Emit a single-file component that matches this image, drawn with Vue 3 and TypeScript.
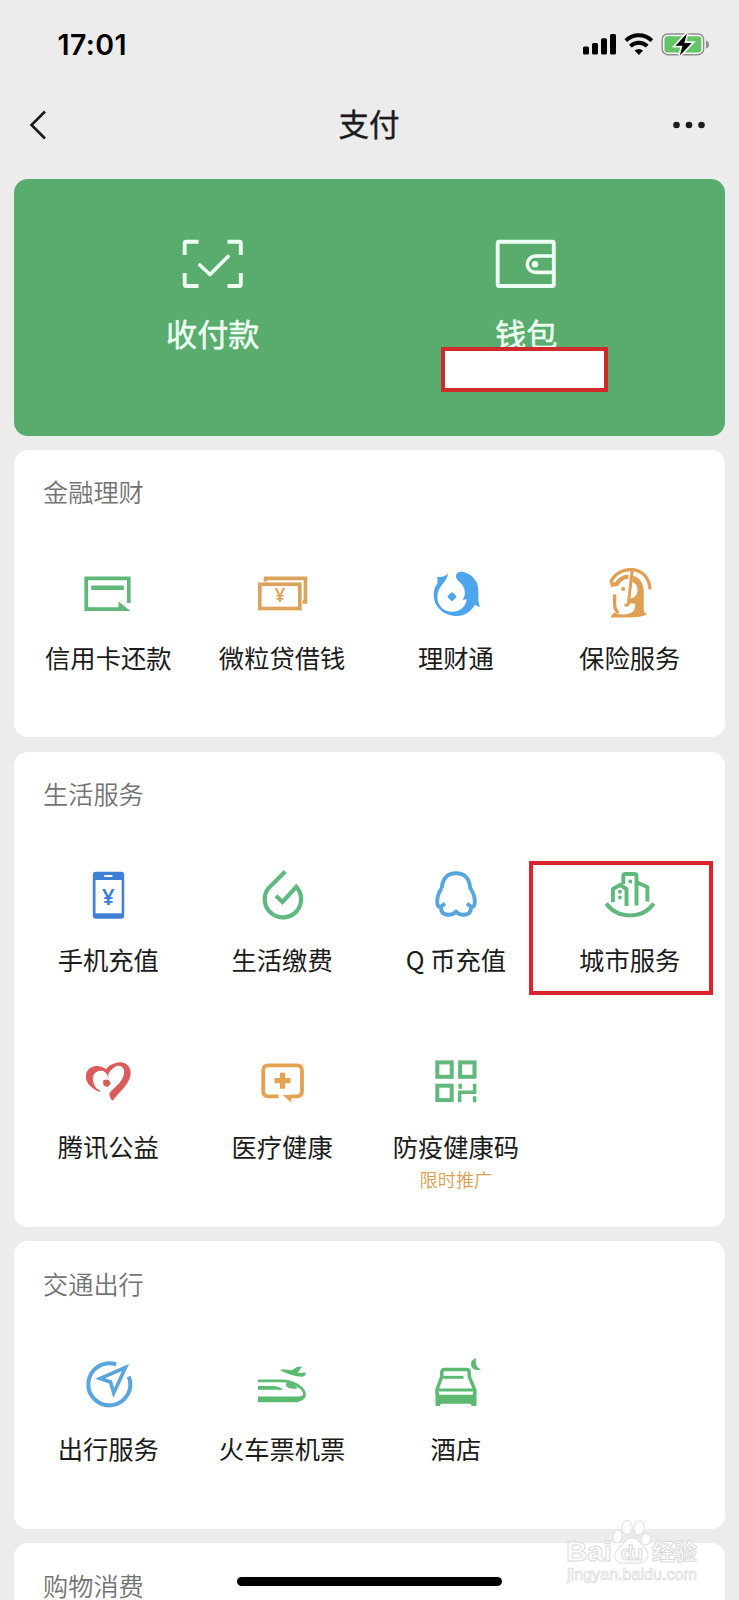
<script setup lang="ts">
interface Service {
  icon: string
  label: string
  note?: string
  marked?: boolean
}
interface Section {
  title: string
  items: Service[]
}

const sections: Section[] = [
  {
    title: '金融理财',
    items: [
      { icon: 'card', label: '信用卡还款' },
      { icon: 'cash', label: '微粒贷借钱' },
      { icon: 'fish', label: '理财通' },
      { icon: 'insurance', label: '保险服务' },
    ],
  },
  {
    title: '生活服务',
    items: [
      { icon: 'phone', label: '手机充值' },
      { icon: 'drop', label: '生活缴费' },
      { icon: 'qcoin', label: 'Q 币充值' },
      { icon: 'city', label: '城市服务', marked: true },
      { icon: 'heart', label: '腾讯公益' },
      { icon: 'medical', label: '医疗健康' },
      { icon: 'qrcode', label: '防疫健康码', note: '限时推广' },
    ],
  },
  {
    title: '交通出行',
    items: [
      { icon: 'compass', label: '出行服务' },
      { icon: 'train', label: '火车票机票' },
      { icon: 'hotel', label: '酒店' },
    ],
  },
  { title: '购物消费', items: [] },
]
</script>

<template>
  <main class="screen">
    <header class="status">
      <span class="time">17:01</span>
      <svg class="status-icons" width="130" height="26" viewBox="0 0 130 26">
        <g fill="#000">
          <rect x="1" y="15.5" width="6" height="8" rx="1.5" />
          <rect x="10" y="12" width="6" height="11.5" rx="1.5" />
          <rect x="19" y="7.3" width="6" height="16.2" rx="1.5" />
          <rect x="28" y="3" width="6" height="20.5" rx="1.5" />
        </g>
        <g fill="none" stroke="#000" stroke-width="3.9">
          <path d="M43.8 9.6a18.5 18.5 0 0 1 26 0" />
          <path d="M48.4 15.2a12 12 0 0 1 16.8 0" />
        </g>
        <path d="M52.6 19.6a6.2 6.2 0 0 1 8.4 0l-4.2 4.3z" />
        <rect x="80.2" y="3" width="41.4" height="20.7" rx="5.5" fill="#f5f5f5" stroke="#8e8e8e" stroke-width="1.4" />
        <rect x="82.5" y="5.3" width="36.8" height="16.1" rx="3" fill="#65c466" />
        <path d="M124 9.5q3 1 3 4t-3 4z" fill="#8e8e8e" />
        <path d="M105 2.5 93.5 14.7h7L97.8 24.5l12-12.6h-7.5z" stroke="#f3f5f3" stroke-width="3.4" />
        <path d="M105 2.5 93.5 14.7h7L97.8 24.5l12-12.6h-7.5z" />
      </svg>
    </header>

    <nav class="nav">
      <svg width="24" height="34" viewBox="0 0 24 34">
        <path d="M19 3.5 5.5 17l13.5 13.5" fill="none" stroke="#1c1c1c" stroke-width="2.6" />
      </svg>
      <h1>支付</h1>
      <svg width="34" height="10" viewBox="0 0 34 10" fill="#1c1c1c">
        <circle cx="4.5" cy="5" r="3.3" />
        <circle cx="17" cy="5" r="3.3" />
        <circle cx="29.5" cy="5" r="3.3" />
      </svg>
    </nav>

    <section class="hero">
      <div class="hero-item">
        <svg width="62" height="50" viewBox="0 0 62 50" fill="none" stroke="#edfff2" stroke-width="3.9">
          <path d="M2.7 16V4.2Q2.7 2.7 4.2 2.7H16.5M45.5 2.7H57.3Q58.8 2.7 58.8 4.2V16M58.8 34V45.500Q58.8 47 57.3 47H45.500M16.500 47H4.200Q2.700 47 2.700 45.500V34" />
          <path d="M17.800 26 28 35.500 46 17.500" stroke-linecap="round" stroke-linejoin="round" stroke-width="3.600" />
        </svg>
        <span class="hero-label">收付款</span>
      </div>
      <div class="hero-item">
        <svg width="62" height="50" viewBox="0 0 62 50" fill="none" stroke="#edfff2" stroke-width="3.9">
          <rect x="2.7" y="2.7" width="56.1" height="44.3" rx="1.5" />
          <path d="M58 17H40.5a8.2 8.2 0 0 0 0 16.4H58" stroke-width="3.6" />
          <circle cx="40" cy="25.2" r="3.3" fill="#edfff2" stroke="none" />
        </svg>
        <span class="hero-label">钱包</span>
        <i class="redaction"></i>
      </div>
    </section>

    <section v-for="section in sections" :key="section.title" class="panel">
      <h2>{{ section.title }}</h2>
      <div class="grid">
        <div v-for="item in section.items" :key="item.label" class="cell">
          <svg class="icon" width="60" height="60" viewBox="0 0 60 60" fill="none">
            <g v-if="item.icon === 'card'">
              <path d="M50.8 40V15.3H8.2V46.2H44" stroke="#5fb878" stroke-width="3.7" />
              <path d="M13.2 24.8H45.8" stroke="#5fb878" stroke-width="4.4" />
              <path d="M40.5 38.5 52.5 48H40.5z" fill="#5fb878" />
            </g>
            <g v-else-if="item.icon === 'cash'" stroke="#dba45c" stroke-width="3.7">
              <rect x="7.8" y="21.3" width="40" height="24.2" />
              <path d="M13.5 18.5V15.3H53.5V39H50.5" />
              <text class="yen" x="28" y="39" fill="#dba45c" stroke="none" font-size="19">¥</text>
            </g>
            <g v-else-if="item.icon === 'fish'" fill="#4da5ee">
              <path d="M22 10.3Q21.8 14 18.8 18.5C14.5 23.5 11.4 27.5 11.4 33.7C11.4 43 18 48.8 26 48.8C34 48.8 40 43.5 40.6 36.2Q38.5 37 36.5 36.5Q39.2 33.5 38.8 28.5C38.3 24 36.5 21.5 33 18.5Q29 15 30.2 11.7Q32.4 7.2 40 9.8C48.5 13 53 21 52.4 30.5Q51.6 38 53.9 44.3L48.8 41.8C45 49 38.5 53 30.8 53C17.5 53 7.7 43.5 7.7 32Q7.7 25 11.5 20.3Q11.8 16 11.2 13.8Q18 15 22 10.3z" />
              <path d="M26 30.5 29.2 33.7 26 36.9 22.8 33.7z" stroke="#4da5ee" stroke-width="2.4" stroke-linejoin="round" />
            </g>
            <g v-else-if="item.icon === 'insurance'" stroke="#e0a053">
              <path d="M10.6 19.6C14 11 22 6.6 30.5 6.6C42 6.6 49.5 14.5 50 26.5" stroke-width="3.2" />
              <path d="M32.2 7 28.5 40.5Q27.5 43.5 24.8 41.5" stroke-width="3" />
              <path d="M10.5 22 17 20.8Q20.5 14.3 28.5 13.5" stroke-width="4.2" />
              <path d="M14.6 31.5V41Q14.6 47 18.5 50" stroke-width="3.4" />
              <path d="M33 13C39.5 14 43.8 20 43.8 29V47.5Q44.2 50 47 51.5Q40 54.8 26 54.4L11 54.5Q10 54 14 49.5Q19 52.5 27 51C34 50 35.5 46 35 40.5H28.5L30.5 35.5Q37.5 34 37.5 27Q37.5 21 32.2 19z" fill="#e0a053" stroke="none" />
              <circle cx="23.2" cy="26" r="2" fill="#e0a053" stroke="none" />
            </g>
            <g v-else-if="item.icon === 'phone'">
              <rect x="14.8" y="6.7" width="31.4" height="47" rx="3.2" fill="#407fd6" />
              <path d="M17.5 15H43.7V48.3H17.5z" fill="#fff" />
              <path d="M27 11H33.7" stroke="#fff" stroke-width="1.8" stroke-linecap="round" />
              <text class="yen" x="30.3" y="39.5" fill="#407fd6" font-size="22">¥</text>
            </g>
            <g v-else-if="item.icon === 'drop'" stroke="#60b981" stroke-width="4.2">
              <path d="M33.3 6.5 16.2 23.5A18.2 18.2 0 1 0 44.2 21.8L30.5 37 24 30.8" />
            </g>
            <g v-else-if="item.icon === 'qcoin'" stroke="#59a6df" stroke-width="3.9" stroke-linejoin="round">
              <path d="M15.8 23C16.5 13 22 8.3 30 8.3C38 8.3 43.5 13 44.2 23C47 27 48.8 32 48.8 36.5Q48.8 43 44.8 41.5M44.8 41.5L41 38.5M44.8 41.5Q45.8 49.5 38 49.7Q33 50 30 46.5Q27 50 22 49.7Q14.2 49.5 15.2 41.5M15.2 41.5L19 38.5M15.2 41.5Q11.2 43 11.2 36.5C11.2 32 13 27 15.8 23" />
            </g>
            <g v-else-if="item.icon === 'city'" stroke="#60b87c" stroke-width="3.9" stroke-linejoin="round">
              <path d="M6.2 38.5C17.5 54.3 42.5 54.3 53.8 38.5" />
              <path d="M12.9 37V24L20 20 26.5 24V41" />
              <path d="M23.3 19V11Q23.3 9 25.3 9H34.5Q36.5 9 36.5 11V40.5" />
              <path d="M37 17.5 47.4 22V36.5" />
              <path d="M18.2 26.8H21.6M18.2 32.5H21.6M28.6 16.5H32" stroke-width="3.4" />
            </g>
            <g v-else-if="item.icon === 'heart'" fill="#da5c5b">
              <path d="M30.3 27Q29.5 19 23 18.8C16.5 18.8 13.8 24 15.3 30C16.5 34.5 18.5 37 22 38.5L21.8 40C12 36 6.7 29.5 8 22.5C9.2 16 15 13.8 20 14Q27 15 30.4 20z" />
              <path d="M27.5 17.5C32 12.5 38.5 9.3 44.5 10.5C51.3 12 54.2 18.5 52 25.5C49.2 34 40.5 41 34.5 48.8Q31 45 31.5 41C36.5 35 43.5 31 45.8 23C47 17 44.5 13.5 40 13.8Q35 14.5 30.3 22z" />
              <circle cx="28.5" cy="31" r="3.4" />
              <path d="M25 28 33 31.5 29 35z" />
            </g>
            <g v-else-if="item.icon === 'medical'" stroke="#e2a24f" stroke-width="3.8">
              <path d="M26.5 44.3H16.2Q11.2 44.3 11.2 39.3V18.3Q11.2 13.3 16.2 13.3H45Q50 13.3 50 18.3V39.3Q50 44.3 45 44.3H38" />
              <path d="M22.5 28.7H38.5M30.5 20.7V36.7" stroke-width="5.2" />
              <path d="M30.7 43H40.5L38.8 50.2z" fill="#e2a24f" stroke="none" />
            </g>
            <g v-else-if="item.icon === 'qrcode'" stroke="#60b87c" stroke-width="4">
              <rect x="11.3" y="10.4" width="14.4" height="14.4" />
              <rect x="34.1" y="10.4" width="14.4" height="14.4" />
              <rect x="11.3" y="33.7" width="14.4" height="14.4" />
              <path d="M34.2 31.7V36.7M48.6 31.7V41.6M50.4 40.3H32.2M33.7 40.3V50.2M48.6 44.2V50.2" stroke-width="3.5" />
            </g>
            <g v-else-if="item.icon === 'compass'" stroke="#59a6df" stroke-width="4">
              <path d="M38.2 10.5A21 21 0 1 0 50.8 22.5" />
              <path d="M47.5 13.5 22 24.5 32.5 28 35.7 39z" stroke-width="3.6" />
            </g>
            <g v-else-if="item.icon === 'train'" fill="#5bb970">
              <path d="M6 26.8H30C42 27 52.5 34.5 52.5 40.5Q52.5 45.5 45.5 46" stroke="#5bb970" stroke-width="2.7" fill="none" />
              <path d="M6 32H20Q28 32 31 35.8H6zM6 42.5H46Q49 42.5 51.5 41L49.5 46 46 48.2H6zM34.5 28.5C41 29 44.5 32 45.5 34.5Q35 35.5 34 31z" />
              <path d="M28 16.3 31 15.2 39.8 16.3 44.5 13.3 50 12.3 45.8 19 53.8 18.5Q54.2 22.5 49 22.8Q41 22.5 28 16.3z" />
            </g>
            <g v-else-if="item.icon === 'hotel'" stroke="#5bb970" stroke-width="3.4">
              <path d="M15.8 22.5V18Q15.8 15.5 18.5 15.5H40.5Q43.2 15.5 43.2 18V22.5L48.7 35.5V40M15.8 22.5 11 35.5V40" />
              <path d="M17 23.3H37.5" stroke-width="2.9" />
              <path d="M12.5 36H47.5" stroke-width="2.9" />
              <path d="M9.5 36 13.5 40.7H46.5L50.5 36V52H45.8L44.5 49.8H15L13.7 52H9.5z" fill="#5bb970" stroke="none" />
              <path d="M50 4Q44 6 45.2 12Q47.5 17.5 55 15.5Q48.5 13.5 50 4z" fill="#5bb970" stroke="none" />
            </g>
          </svg>
          <span class="label">{{ item.label }}</span>
          <span v-if="item.note" class="note">{{ item.note }}</span>
          <i v-if="item.marked" class="marker"></i>
        </div>
      </div>
    </section>

    <div class="home-bar"></div>
    <svg class="watermark" width="140" height="72" viewBox="0 0 140 72">
      <g fill="#fff" stroke="#dcdcdc" stroke-width="1">
        <ellipse cx="53.5" cy="24.5" rx="4.7" ry="6.2" transform="rotate(8 53.5 24.5)" />
        <ellipse cx="63" cy="15.5" rx="5.2" ry="7" />
        <ellipse cx="75" cy="16" rx="5.2" ry="7" transform="rotate(10 75 16)" />
        <ellipse cx="82" cy="27" rx="4.8" ry="6" transform="rotate(15 82 27)" />
        <path d="M68 26C74 26 75 31 80 35C87 41 84 51 76 51H58C50 51 48 42 55 36C61 31 61 26 68 26z" />
      </g>
      <g class="wm-text">
        <text x="2" y="49" font-size="28" textLength="46" lengthAdjust="spacingAndGlyphs">Bai</text>
        <text x="57" y="48" font-size="21" textLength="22">du</text>
        <text x="88" y="48" font-size="23" textLength="45">经验</text>
        <text class="wm-url" x="3" y="68" font-size="16" textLength="130" lengthAdjust="spacingAndGlyphs">jingyan.baidu.com</text>
      </g>
    </svg>
  </main>
</template>

<style>
html,
body {
  margin: 0;
  background: #ececec;
}
</style>

<style scoped>
.screen {
  position: relative;
  width: 739px;
  height: 1600px;
  overflow: hidden;
  background: #ececec;
  color: #1b1b1b;
  font-family: "Noto Sans CJK SC", "Liberation Sans", sans-serif;
}
.status {
  display: flex;
  align-items: center;
  justify-content: space-between;
  height: 88px;
  padding: 0 27px 0 57.5px;
}
.time {
  font-family: Inter, sans-serif;
  font-size: 28.5px;
  font-weight: 600;
  letter-spacing: 0.4px;
  color: #000;
}
.nav {
  display: grid;
  grid-template-columns: 1fr auto 1fr;
  align-items: center;
  height: 74px;
  padding: 0 33px 0 25.5px;
}
.nav svg:last-child {
  justify-self: end;
}
h1 {
  margin: 0 -6.5px 4px 0;
  font-size: 30.5px;
  line-height: 40px;
  font-weight: 400;
  -webkit-text-stroke: 0.4px currentColor;
}
.hero {
  display: flex;
  height: 257px;
  margin: 16.7px 14px 14.3px;
  padding: 0 42px;
  box-sizing: border-box;
  border-radius: 14px;
  background: #59ac6d;
}
.hero-item {
  position: relative;
  flex: 1;
  display: flex;
  flex-direction: column;
  align-items: center;
  padding-top: 60.5px;
}
.hero-label {
  margin-top: 23.5px;
  font-size: 31.2px;
  line-height: 40px;
  color: #edfff2;
  -webkit-text-stroke: 0.5px currentColor;
}
.redaction {
  position: absolute;
  left: 71.8px;
  top: 168.3px;
  width: 167px;
  height: 45px;
  box-sizing: border-box;
  border: 4.5px solid #d0292c;
  background: #fff;
}
.panel {
  margin: 0 14px 14.5px;
  padding-bottom: 22px;
  border-radius: 14px;
  background: #fff;
}
h2 {
  height: 78px;
  margin: 0;
  padding: 23.5px 0 0 29px;
  box-sizing: border-box;
  font-size: 25.2px;
  line-height: 36px;
  font-weight: 350;
  color: #737373;
}
.grid {
  display: grid;
  grid-template-columns: repeat(4, 173.8px);
  justify-content: center;
  margin: 0 0.5px 0 -0.5px;
}
.cell {
  position: relative;
  display: flex;
  flex-direction: column;
  align-items: center;
  height: 187.5px;
  padding-top: 35px;
  box-sizing: border-box;
}
.icon {
  display: block;
}
.label {
  margin-top: 16px;
  font-size: 25.3px;
  line-height: 36px;
  white-space: pre;
}
.note {
  margin-top: 2px;
  font-size: 18.2px;
  line-height: 26px;
  font-weight: 350;
  color: #d79f4e;
}
.marker {
  position: absolute;
  left: -14px;
  top: 31px;
  width: 184px;
  height: 134px;
  box-sizing: border-box;
  border: 4.7px solid #dc222a;
}
.yen {
  font-family: "Noto Sans", sans-serif;
  font-weight: 600;
  text-anchor: middle;
}
.home-bar {
  position: absolute;
  left: 237px;
  top: 1577px;
  width: 265px;
  height: 9px;
  border-radius: 5px;
  background: #000;
}
.watermark {
  position: absolute;
  left: 564px;
  top: 1512px;
}
.wm-text {
  font-family: "Liberation Sans", "Noto Sans CJK SC", sans-serif;
  font-weight: 700;
  fill: #fff;
  stroke: #dadada;
  stroke-width: 1px;
}
.wm-url {
  font-weight: 400;
  stroke-width: 0.7px;
}
</style>
